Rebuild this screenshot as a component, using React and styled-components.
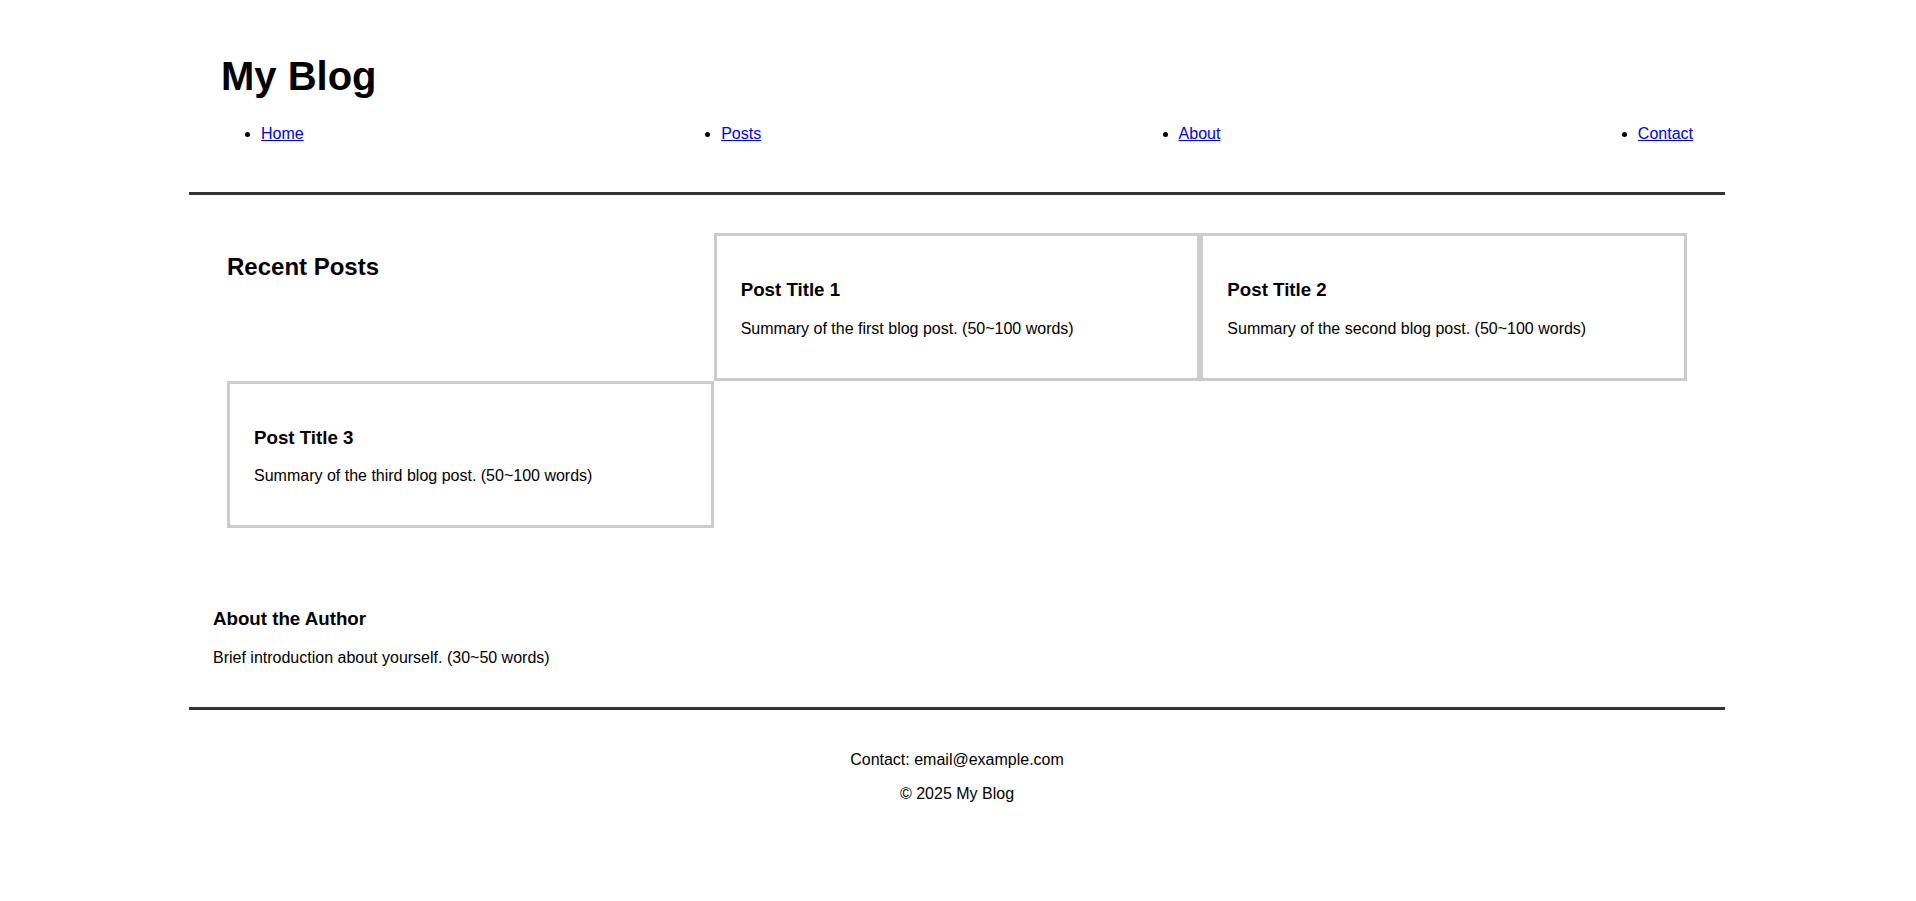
import React from "react";
import styled, { createGlobalStyle } from "styled-components";

const GlobalStyle = createGlobalStyle`
  body {
    margin: 0;
    font-family: "Liberation Sans", Arial, sans-serif;
    color: #000;
    background: #fff;
  }
`;

const Page = styled.div`
  max-width: 1536px;
  margin: 0 calc(50% - 767px) 0 calc(50% - 769px);
`;

const Header = styled.header`
  padding: 32px 32px 33px;
  border-bottom: 3px solid #333;
`;

const SiteTitle = styled.h1`
  font-size: 40px;
  margin: 21.6px 0 26.8px;
`;

const NavList = styled.ul`
  display: flex;
  justify-content: space-between;
  margin: 16px 0;
  padding-left: 40px;
`;

const NavItem = styled.li`
  list-style: disc;
`;

const NavLink = styled.a`
  color: #0000ee;
  text-decoration: underline;
`;

const PostsSection = styled.section`
  padding: 38px 38px 37px;
`;

const PostGrid = styled.div`
  display: grid;
  grid-template-columns: repeat(auto-fill, minmax(400px, 1fr));
`;

const SectionTitle = styled.h2`
  font-size: 24px;
  margin: 19.92px 0;
`;

const PostCard = styled.article`
  border: 3px solid #ccc;
  padding: 24px;
`;

const PostTitle = styled.h3`
  font-size: 18.72px;
  margin: 18.72px 0;
`;

const Text = styled.p`
  font-size: 16px;
  margin: 16px 0;
`;

const About = styled.section`
  padding: 24px;
`;

const Footer = styled.footer`
  border-top: 3px solid #333;
  padding: 25px 24px 24px;
  text-align: center;
`;

const navLinks = ["Home", "Posts", "About", "Contact"];

const posts = [
  { id: 1, title: "Post Title 1", summary: "Summary of the first blog post. (50~100 words)" },
  { id: 2, title: "Post Title 2", summary: "Summary of the second blog post. (50~100 words)" },
  { id: 3, title: "Post Title 3", summary: "Summary of the third blog post. (50~100 words)" },
];

const App = () => {
  return (
    <Page>
      <GlobalStyle />
      <Header>
        <SiteTitle>My Blog</SiteTitle>
        <nav>
          <NavList>
            {navLinks.map((link) => (
              <NavItem key={link}>
                <NavLink href="#">{link}</NavLink>
              </NavItem>
            ))}
          </NavList>
        </nav>
      </Header>

      <PostsSection>
        <PostGrid>
          <SectionTitle>Recent Posts</SectionTitle>
          {posts.map((post) => (
            <PostCard key={post.id}>
              <PostTitle>{post.title}</PostTitle>
              <Text>{post.summary}</Text>
            </PostCard>
          ))}
        </PostGrid>
      </PostsSection>

      <About>
        <PostTitle>About the Author</PostTitle>
        <Text>Brief introduction about yourself. (30~50 words)</Text>
      </About>

      <Footer>
        <Text>Contact: email@example.com</Text>
        <Text>&copy; 2025 My Blog</Text>
      </Footer>
    </Page>
  );
};

export default App;
